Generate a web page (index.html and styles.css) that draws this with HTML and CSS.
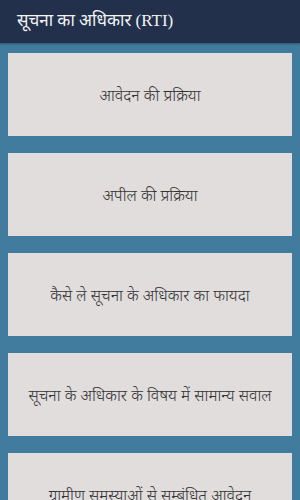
FILE: index.html
```html
<!DOCTYPE html>
<html lang="hi">
<head>
  <meta charset="UTF-8" />
  <meta name="viewport" content="width=device-width, initial-scale=1.0" />
  <title>सूचना का अधिकार (RTI)</title>
  <link rel="stylesheet" href="styles.css">
</head>
<body>
  <header class="app-bar">
    <h1>सूचना का अधिकार (RTI)</h1>
  </header>

  <main class="menu-list">
    <a class="menu-card" href="#">आवेदन की प्रक्रिया</a>
    <a class="menu-card" href="#">अपील की प्रक्रिया</a>
    <a class="menu-card" href="#">कैसे ले सूचना के अधिकार का फायदा</a>
    <a class="menu-card" href="#">सूचना के अधिकार के विषय में सामान्य सवाल</a>
    <a class="menu-card" href="#">ग्रामीण समस्याओं से सम्बंधित आवेदन</a>
  </main>
</body>
</html>
```

FILE: styles.css
```css
* {
  margin: 0;
  padding: 0;
  box-sizing: border-box;
  font-family: 'Noto Sans', 'Noto Sans Devanagari', sans-serif;
}

body {
  height: 100vh;
  overflow: hidden;
  background: #417b9d;
}

.app-bar {
  height: 43px;
  background: #22304b;
  display: flex;
  align-items: center;
  padding: 0 17px;
  box-shadow: 0 1px 2px rgba(0, 0, 0, 0.3);
}

.app-bar h1 {
  font-family: 'Liberation Serif', 'Noto Sans Devanagari', serif;
  font-size: 17px;
  font-weight: normal;
  color: #f4f4f4;
}

.menu-list {
  display: flex;
  flex-direction: column;
  gap: 17px;
  padding: 10px 8px;
}

.menu-card {
  height: 83px;
  flex-shrink: 0;
  display: flex;
  align-items: center;
  justify-content: center;
  text-align: center;
  background: #e1dddd;
  color: #333333;
  font-size: 16px;
  font-weight: 300;
  text-decoration: none;
}
```
